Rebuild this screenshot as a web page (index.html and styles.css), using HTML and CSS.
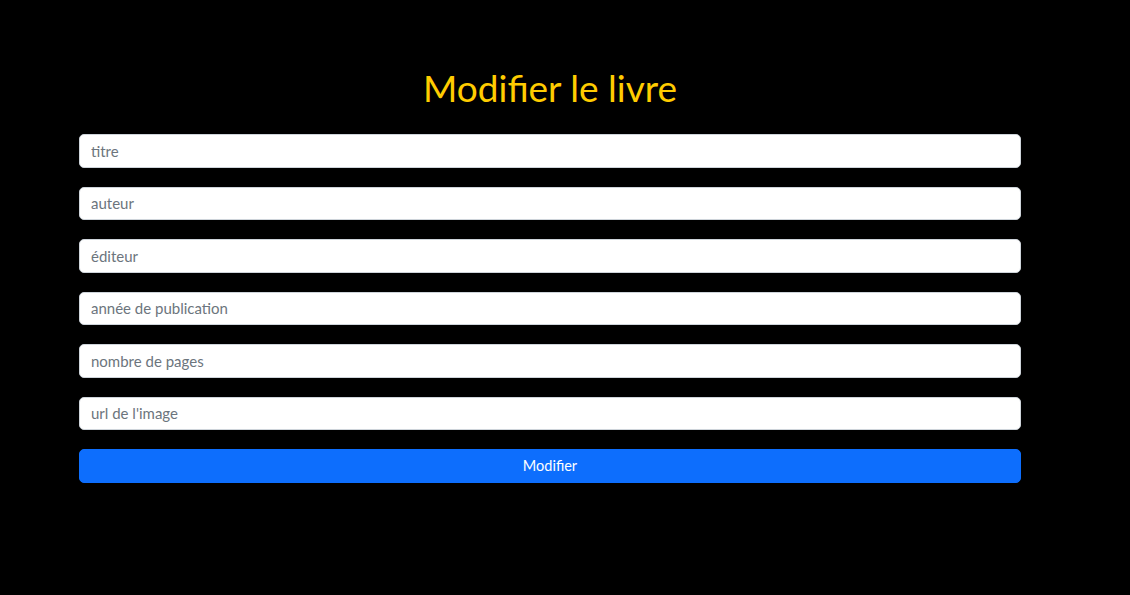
FILE: index.html
```html
<!DOCTYPE html>
<html lang="fr">
<head>
<meta charset="utf-8">
<title>Modifier le livre</title>
<link rel="stylesheet" href="styles.css">
</head>
<body>
<main class="container">
  <h1 class="title">Modifier le livre</h1>
  <form class="book-form">
    <input class="field" type="text" placeholder="titre">
    <input class="field" type="text" placeholder="auteur">
    <input class="field" type="text" placeholder="éditeur">
    <input class="field" type="text" placeholder="année de publication">
    <input class="field" type="text" placeholder="nombre de pages">
    <input class="field" type="text" placeholder="url de l'image">
    <button class="submit" type="button">Modifier</button>
  </form>
</main>
</body>
</html>
```
FILE: styles.css
```css
* { box-sizing: border-box; }
html, body {
  margin: 0;
  padding: 0;
  background: #000;
  height: 100%;
}
body {
  font-family: Lato, "Noto Sans", sans-serif;
  color: #fff;
}
.container {
  width: 942px;
  margin-left: 79px;
  padding-top: 66px;
}
.title {
  margin: 0 0 24px;
  text-align: center;
  font-weight: 400;
  font-size: 37px;
  line-height: 44px;
  color: #ffcc00;
}
.book-form {
  display: flex;
  flex-direction: column;
  gap: 19px;
}
.field {
  display: block;
  width: 100%;
  height: 33.5px;
  padding: 6px 11px;
  font-family: inherit;
  font-size: 15px;
  line-height: 19.5px;
  color: #212529;
  background: #fff;
  border: 1px solid #ced4da;
  border-radius: 5px;
  outline: none;
}
.field::placeholder {
  color: #6c757d;
  opacity: 1;
}
.submit {
  display: block;
  width: 100%;
  height: 33.5px;
  padding: 6px 12px;
  font-family: inherit;
  font-size: 14.5px;
  line-height: 19.5px;
  color: #fff;
  background: #0d6efd;
  border: 1px solid #0d6efd;
  border-radius: 5px;
  cursor: pointer;
}
```
